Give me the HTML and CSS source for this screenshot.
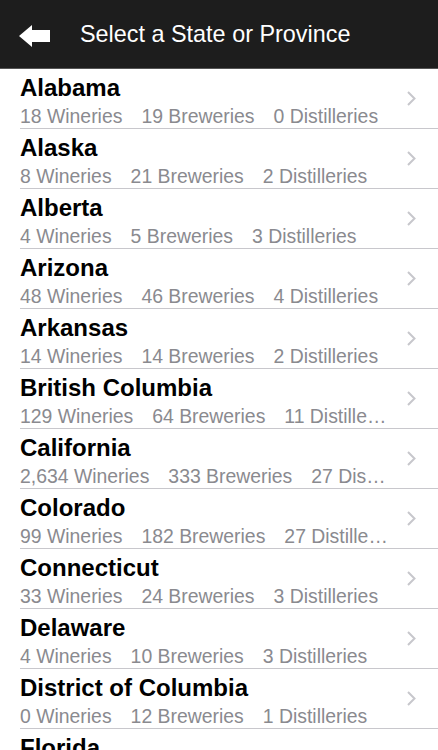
FILE: index.html
```html
<!DOCTYPE html>
<html>
<head>
<meta charset="utf-8">
<link rel="stylesheet" href="styles.css">
</head>
<body>
<header class="nav">
  <svg class="back" width="31" height="22" viewBox="0 0 31 22"><path d="M0 11 L13 0 L13 5 L31 5 L31 17 L13 17 L13 22 Z" fill="#fff"/></svg>
  <div class="nav-title">Select a State or Province</div>
</header>
<ul class="list">
  <li class="row"><div class="text"><div class="name">Alabama</div><div class="stats"><span class="stat">18 Wineries</span><span class="stat">19 Breweries</span><span class="stat">0 Distilleries</span></div></div><svg class="chev" width="9" height="15" viewBox="0 0 9 15"><path d="M1 1 L7.5 7.5 L1 14" fill="none" stroke="#c7c7cc" stroke-width="2"/></svg></li>
  <li class="row"><div class="text"><div class="name">Alaska</div><div class="stats"><span class="stat">8 Wineries</span><span class="stat">21 Breweries</span><span class="stat">2 Distilleries</span></div></div><svg class="chev" width="9" height="15" viewBox="0 0 9 15"><path d="M1 1 L7.5 7.5 L1 14" fill="none" stroke="#c7c7cc" stroke-width="2"/></svg></li>
  <li class="row"><div class="text"><div class="name">Alberta</div><div class="stats"><span class="stat">4 Wineries</span><span class="stat">5 Breweries</span><span class="stat">3 Distilleries</span></div></div><svg class="chev" width="9" height="15" viewBox="0 0 9 15"><path d="M1 1 L7.5 7.5 L1 14" fill="none" stroke="#c7c7cc" stroke-width="2"/></svg></li>
  <li class="row"><div class="text"><div class="name">Arizona</div><div class="stats"><span class="stat">48 Wineries</span><span class="stat">46 Breweries</span><span class="stat">4 Distilleries</span></div></div><svg class="chev" width="9" height="15" viewBox="0 0 9 15"><path d="M1 1 L7.5 7.5 L1 14" fill="none" stroke="#c7c7cc" stroke-width="2"/></svg></li>
  <li class="row"><div class="text"><div class="name">Arkansas</div><div class="stats"><span class="stat">14 Wineries</span><span class="stat">14 Breweries</span><span class="stat">2 Distilleries</span></div></div><svg class="chev" width="9" height="15" viewBox="0 0 9 15"><path d="M1 1 L7.5 7.5 L1 14" fill="none" stroke="#c7c7cc" stroke-width="2"/></svg></li>
  <li class="row"><div class="text"><div class="name">British Columbia</div><div class="stats"><span class="stat">129 Wineries</span><span class="stat">64 Breweries</span><span class="stat">11 Distilleries</span></div></div><svg class="chev" width="9" height="15" viewBox="0 0 9 15"><path d="M1 1 L7.5 7.5 L1 14" fill="none" stroke="#c7c7cc" stroke-width="2"/></svg></li>
  <li class="row"><div class="text"><div class="name">California</div><div class="stats"><span class="stat">2,634 Wineries</span><span class="stat">333 Breweries</span><span class="stat">27 Distilleries</span></div></div><svg class="chev" width="9" height="15" viewBox="0 0 9 15"><path d="M1 1 L7.5 7.5 L1 14" fill="none" stroke="#c7c7cc" stroke-width="2"/></svg></li>
  <li class="row"><div class="text"><div class="name">Colorado</div><div class="stats"><span class="stat">99 Wineries</span><span class="stat">182 Breweries</span><span class="stat">27 Distilleries</span></div></div><svg class="chev" width="9" height="15" viewBox="0 0 9 15"><path d="M1 1 L7.5 7.5 L1 14" fill="none" stroke="#c7c7cc" stroke-width="2"/></svg></li>
  <li class="row"><div class="text"><div class="name">Connecticut</div><div class="stats"><span class="stat">33 Wineries</span><span class="stat">24 Breweries</span><span class="stat">3 Distilleries</span></div></div><svg class="chev" width="9" height="15" viewBox="0 0 9 15"><path d="M1 1 L7.5 7.5 L1 14" fill="none" stroke="#c7c7cc" stroke-width="2"/></svg></li>
  <li class="row"><div class="text"><div class="name">Delaware</div><div class="stats"><span class="stat">4 Wineries</span><span class="stat">10 Breweries</span><span class="stat">3 Distilleries</span></div></div><svg class="chev" width="9" height="15" viewBox="0 0 9 15"><path d="M1 1 L7.5 7.5 L1 14" fill="none" stroke="#c7c7cc" stroke-width="2"/></svg></li>
  <li class="row"><div class="text"><div class="name">District of Columbia</div><div class="stats"><span class="stat">0 Wineries</span><span class="stat">12 Breweries</span><span class="stat">1 Distilleries</span></div></div><svg class="chev" width="9" height="15" viewBox="0 0 9 15"><path d="M1 1 L7.5 7.5 L1 14" fill="none" stroke="#c7c7cc" stroke-width="2"/></svg></li>
  <li class="row"><div class="text"><div class="name">Florida</div><div class="stats"><span class="stat">62 Wineries</span><span class="stat">98 Breweries</span><span class="stat">9 Distilleries</span></div></div><svg class="chev" width="9" height="15" viewBox="0 0 9 15"><path d="M1 1 L7.5 7.5 L1 14" fill="none" stroke="#c7c7cc" stroke-width="2"/></svg></li>
</ul>
</body>
</html>
```
FILE: styles.css
```css
html, body {
  margin: 0;
  padding: 0;
  background: #fff;
  font-family: "Liberation Sans", Arial, sans-serif;
  overflow: hidden;
}
.nav {
  height: 69px;
  background: #1d1d1d;
  display: flex;
  align-items: center;
  padding-left: 19px;
  box-sizing: border-box;
  border-bottom: 1px solid #555;
}
.back {
  display: block;
  flex: none;
  margin-top: 3px;
}
.nav-title {
  color: #fff;
  font-size: 23.4px;
  line-height: 28px;
  margin-left: 30px;
}
.list {
  list-style: none;
  margin: 0;
  padding: 0 0 0 20px;
}
.row {
  display: flex;
  align-items: center;
  height: 60px;
  box-sizing: border-box;
  border-bottom: 1px solid #c8c7cc;
  padding-right: 22px;
}
.text {
  flex: 1;
  min-width: 0;
  margin-right: 17px;
  padding-top: 3px;
}
.name {
  font-size: 24px;
  font-weight: bold;
  color: #000;
  line-height: 28px;
  white-space: nowrap;
}
.stats {
  font-size: 19.4px;
  line-height: 22px;
  color: #8a8a8f;
  margin-top: 3px;
  white-space: nowrap;
  overflow: hidden;
  text-overflow: ellipsis;
}
.stat + .stat {
  margin-left: 19px;
}
.chev {
  display: block;
  flex: none;
}
```
